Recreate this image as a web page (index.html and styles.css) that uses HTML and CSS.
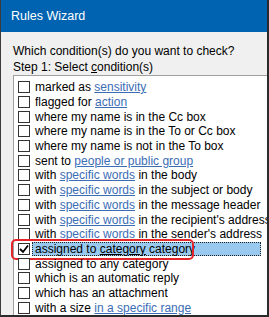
FILE: index.html
```html
<!DOCTYPE html>
<html lang="en">
<head>
  <meta charset="UTF-8">
  <meta name="viewport" content="width=device-width, initial-scale=1.0">
  <title>Rules Wizard</title>
  <link rel="stylesheet" href="styles.css">
</head>
<body>
  <div class="window">
    <div class="titlebar">Rules Wizard</div>
    <div class="content">
      <p class="question">Which condition(s) do you want to check?</p>
      <p class="step">Step 1: Select <u>c</u>ondition(s)</p>
      <ul class="conditions">
        <li><span class="box"></span><span class="label">marked as&nbsp;<a href="#">sensitivity</a></span></li>
        <li><span class="box"></span><span class="label">flagged for&nbsp;<a href="#">action</a></span></li>
        <li><span class="box"></span><span class="label">where my name is in the Cc box</span></li>
        <li><span class="box"></span><span class="label">where my name is in the To or Cc box</span></li>
        <li><span class="box"></span><span class="label">where my name is not in the To box</span></li>
        <li><span class="box"></span><span class="label">sent to&nbsp;<a href="#">people or public group</a></span></li>
        <li><span class="box"></span><span class="label">with&nbsp;<a href="#">specific words</a>&nbsp;in the body</span></li>
        <li><span class="box"></span><span class="label">with&nbsp;<a href="#">specific words</a>&nbsp;in the subject or body</span></li>
        <li><span class="box"></span><span class="label">with&nbsp;<a href="#">specific words</a>&nbsp;in the message header</span></li>
        <li><span class="box"></span><span class="label">with&nbsp;<a href="#">specific words</a>&nbsp;in the recipient's address</span></li>
        <li><span class="box"></span><span class="label">with&nbsp;<a href="#">specific words</a>&nbsp;in the sender's address</span></li>
        <li class="selected">
          <span class="box checked">
            <svg width="10" height="10" viewBox="0 0 10 10"><polyline points="1,5 4,8 9,1.5" fill="none" stroke="#000" stroke-width="1.8"/></svg>
          </span>
          <span class="label">assigned to&nbsp;<a href="#">category</a>&nbsp;category</span>
          <span class="callout"></span>
        </li>
        <li><span class="box"></span><span class="label">assigned to any category</span></li>
        <li><span class="box"></span><span class="label">which is an automatic reply</span></li>
        <li><span class="box"></span><span class="label">which has an attachment</span></li>
        <li><span class="box"></span><span class="label">with a size&nbsp;<a href="#">in a specific range</a></span></li>
      </ul>
    </div>
  </div>
</body>
</html>
```

FILE: styles.css
```css
html, body {
  margin: 0;
  padding: 0;
}
body {
  font-family: "Liberation Sans", Arial, sans-serif;
  font-size: 12px;
  color: #000;
  background: #fff;
}
.window {
  width: 269px;
  height: 317px;
  box-sizing: border-box;
  border-left: 1px solid #3c3c3c;
  border-right: 2px solid #2b2b2b;
  border-bottom: 2px solid #2b2b2b;
  background: #f0f0f0;
  overflow: hidden;
  display: flex;
  flex-direction: column;
}
.titlebar {
  height: 32px;
  flex: none;
  background: #0063b1;
  color: #fff;
  line-height: 32px;
  padding-left: 10px;
  font-size: 12.5px;
}
.content {
  flex: 1;
  display: flex;
  flex-direction: column;
  padding-left: 12px;
  min-height: 0;
}
.question {
  margin: 11px 0 0;
  line-height: 16px;
}
.step {
  margin: 0;
  line-height: 16px;
}
.step u {
  text-decoration-thickness: 1px;
}
.conditions {
  list-style: none;
  margin: 0;
  padding: 4px 0 0;
  flex: 1;
  background: #fff;
  border-top: 1px solid #a0a0a0;
  border-left: 1px solid #a0a0a0;
}
.conditions li {
  position: relative;
  display: flex;
  align-items: center;
  height: 14.7px;
}
.box {
  width: 12px;
  height: 12px;
  box-sizing: border-box;
  border: 1px solid #333;
  background: #fff;
  margin-left: 4px;
  flex: none;
  display: flex;
  align-items: center;
  justify-content: center;
}
.label {
  flex: 1;
  min-width: 0;
  margin: 0 6px 0 2px;
  padding-left: 2px;
  white-space: nowrap;
  border: 1px dotted transparent;
  box-sizing: border-box;
  height: 14.7px;
  display: flex;
  align-items: center;
}
.label a {
  color: #3b6db5;
  text-decoration: underline;
}
.selected .label {
  background: #99c9ef;
  border-color: #222;
}
.selected .label a {
  color: #000;
}
.callout {
  position: absolute;
  left: -3px;
  top: -3px;
  width: 183px;
  height: 21px;
  box-sizing: border-box;
  border: 2px solid #e4262b;
  border-radius: 5px;
}
```
